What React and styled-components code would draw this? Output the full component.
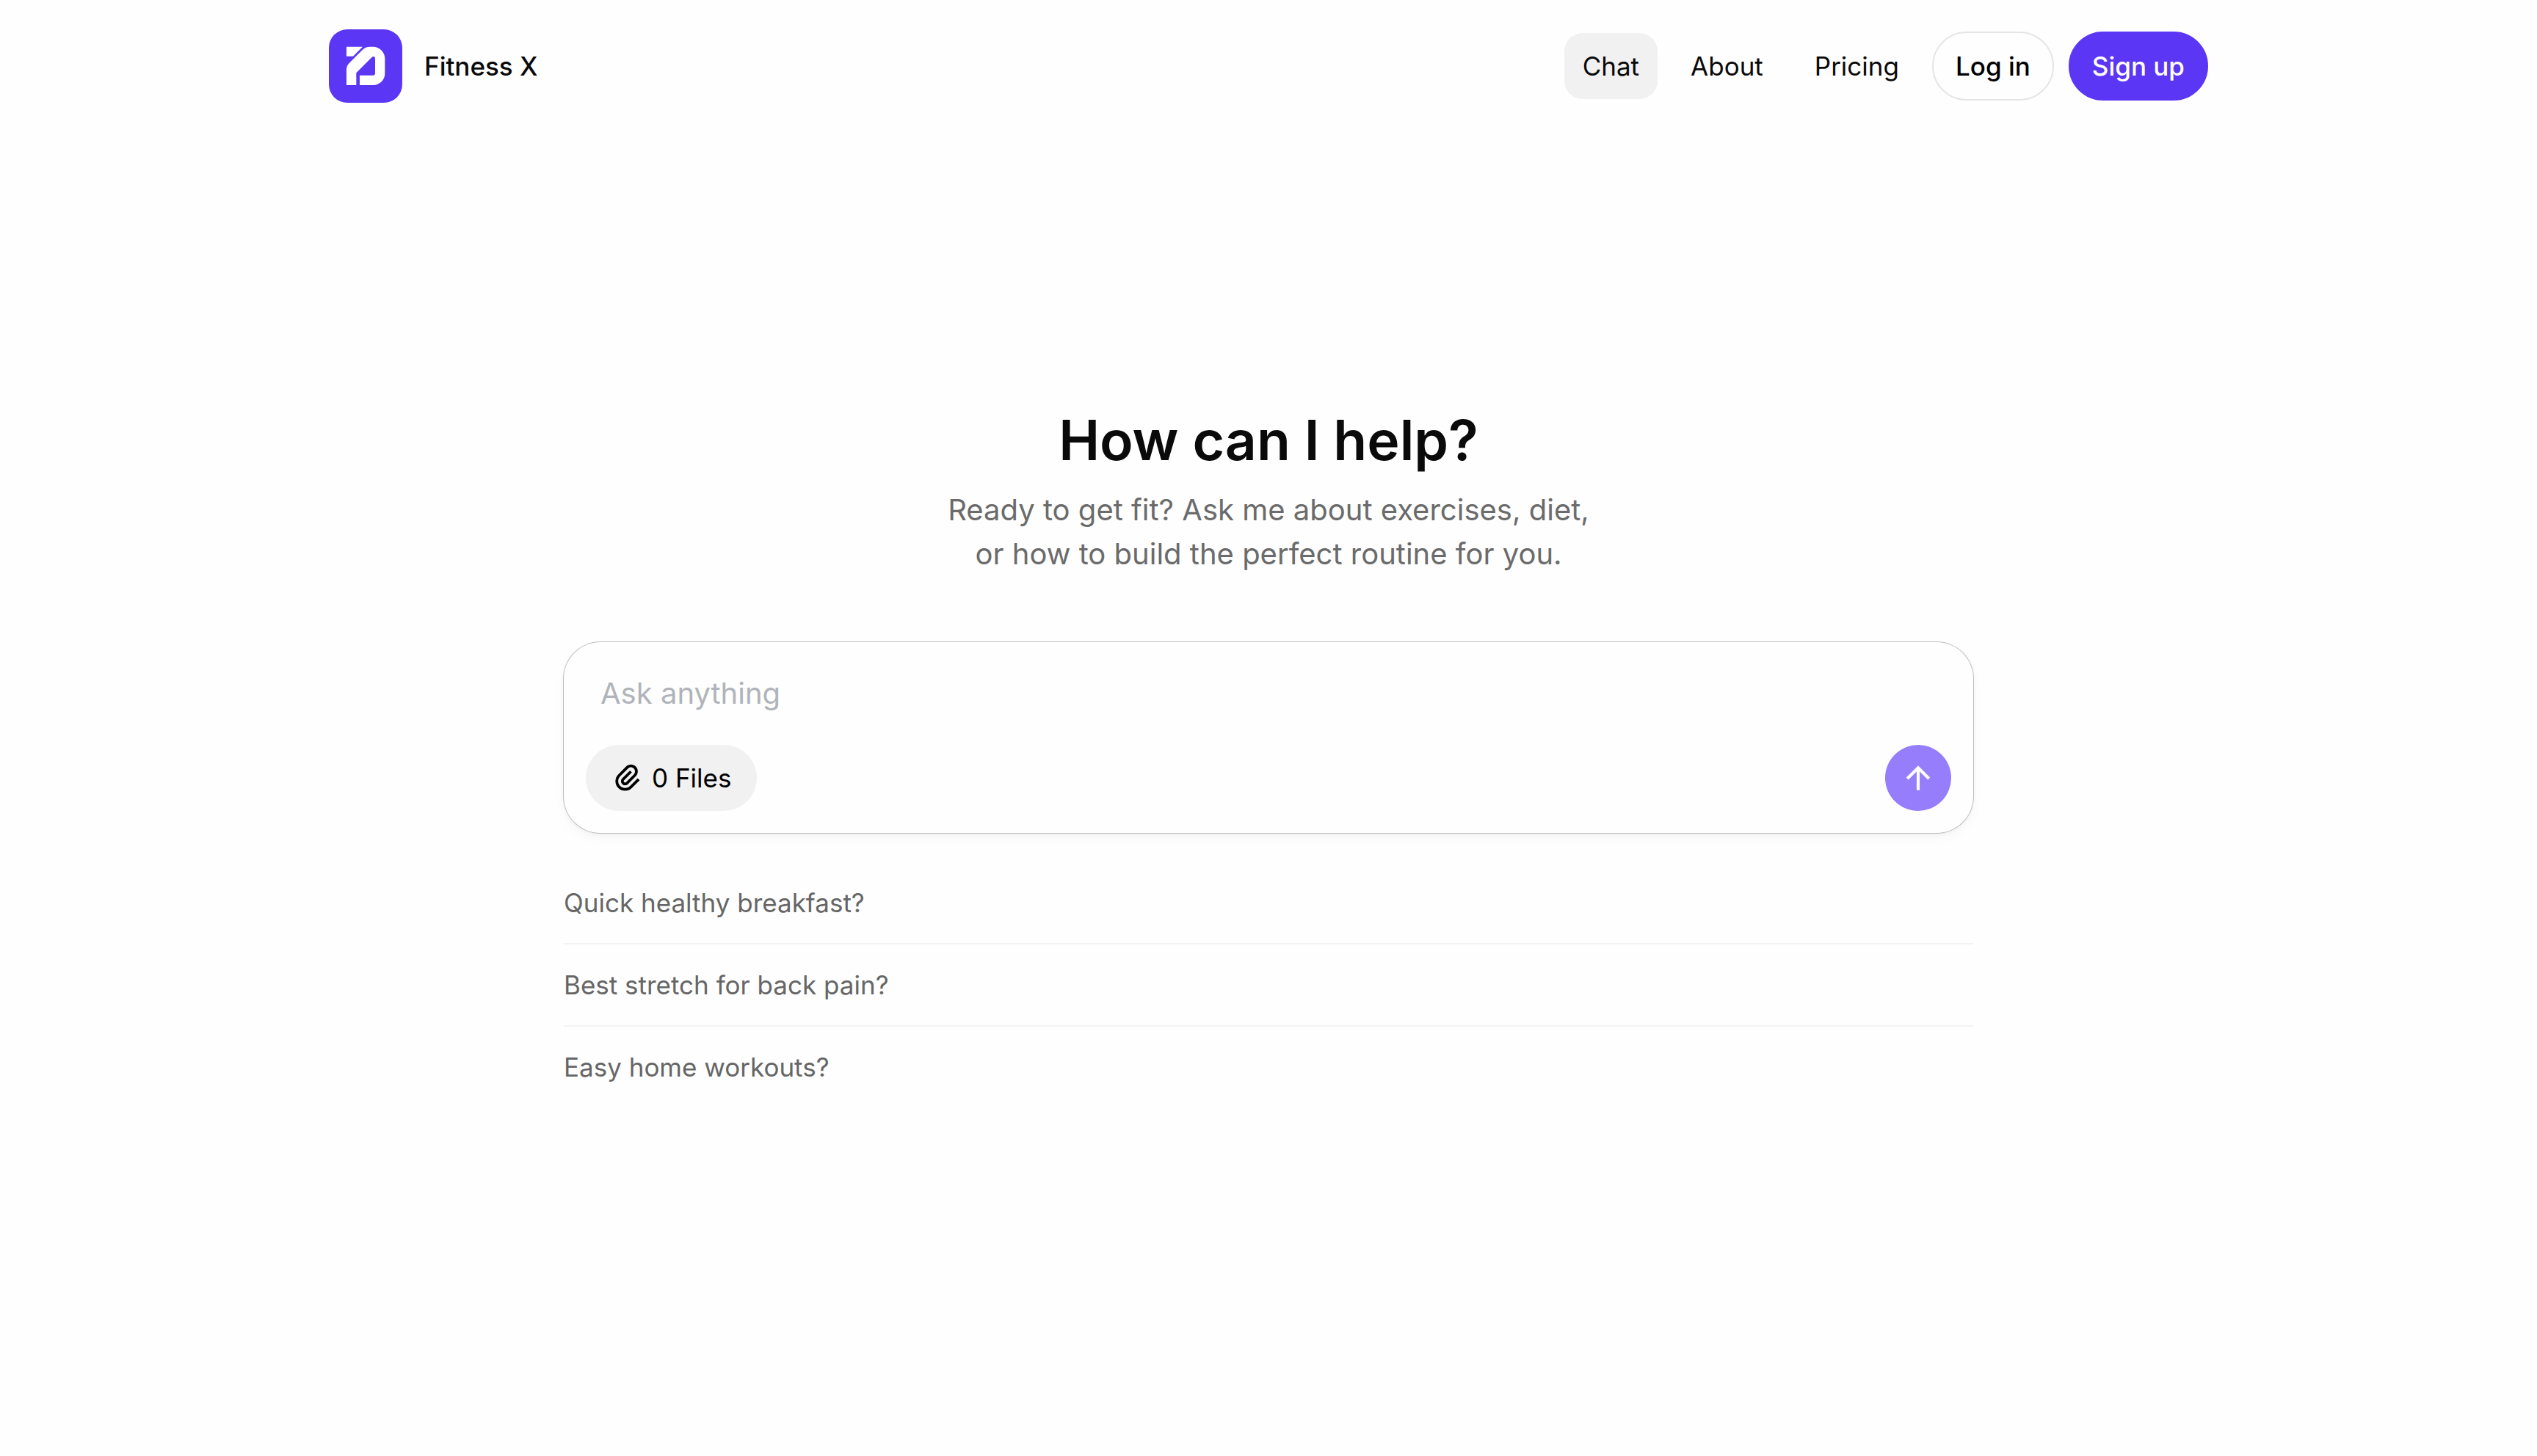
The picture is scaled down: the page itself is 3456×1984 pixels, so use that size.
import { useState } from 'react'
import styled, { createGlobalStyle } from 'styled-components'
import { RiArrowUpLine, RiAttachment2 } from 'react-icons/ri'

const GlobalStyle = createGlobalStyle`
  * {
    box-sizing: border-box;
  }
  body {
    margin: 0;
    background: #fefefe;
    color: #0a0a0a;
    font-family: Inter, sans-serif;
    font-size: 35px;
    line-height: 54px;
  }
  button, textarea {
    font: inherit;
    color: inherit;
  }
`
const Page = styled.div`
  min-height: 1984px;
`
const Header = styled.header`
  width: 2560px;
  height: 180px;
  margin: 0 auto;
  display: flex;
  align-items: center;
  justify-content: space-between;
`
const Brand = styled.a`
  display: flex;
  align-items: center;
  gap: 30px;
  font-weight: 500;
`
const Logo = styled.svg`
  width: 100px;
  height: 100px;
  border-radius: 25px;
  background: #5b36f5;
`
const Nav = styled.nav`
  display: flex;
  align-items: center;
  gap: 20px;
`
const NavLink = styled.a`
  height: 90px;
  padding: 0 25px;
  border-radius: 25px;
  line-height: 90px;
  background: ${props => props.$active ? '#f1f1f1' : 'transparent'};
`
const NavButton = styled.button`
  height: 94px;
  padding: 0 30px;
  border: 2px solid ${props => props.$primary ? '#5b36f5' : '#e5e5e5'};
  border-radius: 47px;
  background: ${props => props.$primary ? '#5b36f5' : '#fefefe'};
  color: ${props => props.$primary ? '#fff' : '#000'};
  font-weight: 500;
`
const Main = styled.main`
  width: 1920px;
  margin: 0 auto;
  padding-top: 375px;
`
const Title = styled.h1`
  margin: 0 0 20px;
  font-size: 75px;
  line-height: 90px;
  font-weight: 600;
  text-align: center;
`
const Subtitle = styled.p`
  margin: 0 0 90px;
  font-size: 40px;
  line-height: 60px;
  color: #6b6b6b;
  text-align: center;
`
const Composer = styled.form`
  height: 260px;
  padding: 40px 30px 30px;
  display: flex;
  flex-direction: column;
  justify-content: space-between;
  border-radius: 50px;
  background: #fefefe;
  box-shadow: 0 0 0 1px #bfbfbf, 0 2px 5px rgba(0, 0, 0, 0.05), 0 8px 16px rgba(0, 0, 0, 0.03);
`
const Prompt = styled.textarea`
  height: 60px;
  padding: 0 20px;
  border: 0;
  outline: 0;
  resize: none;
  overflow: hidden;
  background: transparent;
  font-size: 40px;
  line-height: 60px;
  &::placeholder {
    color: #b0b4ba;
    opacity: 1;
  }
`
const Actions = styled.div`
  display: flex;
  align-items: center;
  justify-content: space-between;
`
const FilesButton = styled.button`
  height: 90px;
  padding: 0 35px;
  display: flex;
  align-items: center;
  gap: 10px;
  border: 0;
  border-radius: 45px;
  background: #f1f1f1;
  color: #000;
`
const SendButton = styled.button`
  width: 90px;
  height: 90px;
  padding: 0;
  display: flex;
  align-items: center;
  justify-content: center;
  border: 0;
  border-radius: 50%;
  background: #967dfb;
  color: #fff;
`
const Suggestions = styled.ul`
  margin: 40px 0 0;
  padding: 0;
  list-style: none;
`
const Suggestion = styled.li`
  height: 112px;
  line-height: 110px;
  border-bottom: 2px solid #f3f3f3;
  color: #666;
  &:last-child {
    border-bottom: 0;
  }
`

const links = ['Chat', 'About', 'Pricing']
const suggestions = [
  'Quick healthy breakfast?',
  'Best stretch for back pain?',
  'Easy home workouts?'
]

function LogoMark(){
  return (
    <Logo viewBox="0 0 300 300" fill="#fff">
      <path d="M72 71H138L99 110H72Z" />
      <path d="M72 228V164Q72 149 83 138L137 84Q150 71 168 71H180Q200 71 215 86Q229 100 229 120V180Q229 200 215 214Q201 228 181 228H126V188H180Q189 188 189 179V119Q189 111 183 111Q179 111 175 115L112 178V228Z" />
    </Logo>
  )
}

function App(){
  const [text, setText] = useState('')

  return (
    <>
      <GlobalStyle />
      <Page>
        <Header>
          <Brand>
            <LogoMark />
            Fitness X
          </Brand>
          <Nav>
            {links.map(link => (
              <NavLink key={link} $active={link === 'Chat'}>{link}</NavLink>
            ))}
            <NavButton>Log in</NavButton>
            <NavButton $primary>Sign up</NavButton>
          </Nav>
        </Header>
        <Main>
          <Title>How can I help?</Title>
          <Subtitle>
            Ready to get fit? Ask me about exercises, diet,<br />
            or how to build the perfect routine for you.
          </Subtitle>
          <Composer onSubmit={e => e.preventDefault()}>
            <Prompt
              placeholder="Ask anything"
              value={text}
              onChange={e => setText(e.target.value)}
            />
            <Actions>
              <FilesButton type="button">
                <RiAttachment2 size={45} />
                0 Files
              </FilesButton>
              <SendButton>
                <RiArrowUpLine size={50} />
              </SendButton>
            </Actions>
          </Composer>
          <Suggestions>
            {suggestions.map(item => (
              <Suggestion key={item}>{item}</Suggestion>
            ))}
          </Suggestions>
        </Main>
      </Page>
    </>
  )
}

export default App
